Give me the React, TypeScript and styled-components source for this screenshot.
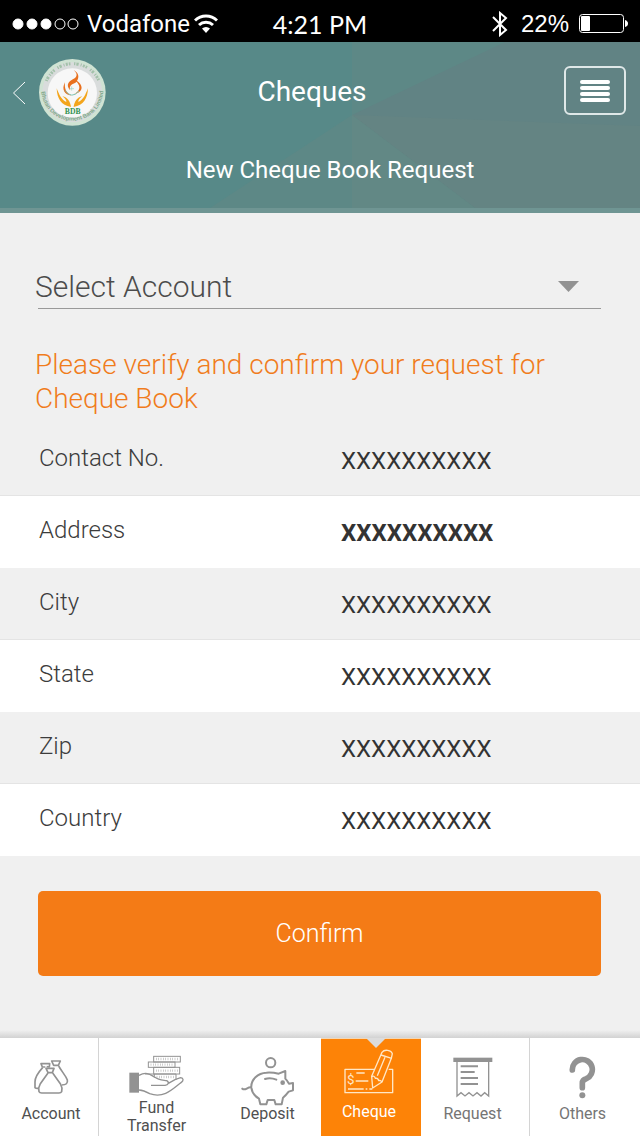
import React from "react";
import styled, { createGlobalStyle, css } from "styled-components";

const GlobalStyle = createGlobalStyle`
  *, *::before, *::after { box-sizing: border-box; }
  body {
    margin: 0;
    background: #f0f0f0;
    color: #3c3c3c;
    font-family: Roboto, "Liberation Sans", sans-serif;
  }
  button, select { font: inherit; color: inherit; }
`;

const Screen = styled.div`
  min-height: 100vh;
  display: flex;
  flex-direction: column;
`;

/* ---------- status bar ---------- */

const StatusBar = styled.div`
  height: 42px;
  padding: 6px 12px 0;
  background: #000;
  color: #fff;
  display: grid;
  grid-template-columns: 1fr auto 1fr;
  align-items: center;
  font-size: 24px;
  line-height: 30px;
`;

const StatusGroup = styled.div<{ $end?: boolean }>`
  display: flex;
  align-items: center;
  gap: ${(p) => (p.$end ? 10 : 4)}px;
  justify-content: ${(p) => (p.$end ? "flex-end" : "flex-start")};
`;

const Carrier = styled.span`
  padding-left: 4px;
`;

const Clock = styled.span`
  font-family: Lato, sans-serif;
  font-size: 25px;
`;

const Percent = styled.span`
  padding-left: 3px;
  font-family: "Liberation Sans", sans-serif;
`;

/* ---------- header ---------- */

const Header = styled.header`
  position: relative;
  height: 171px;
  background: #578988;
  border-bottom: 5px solid #6f9593;
  color: #fff;
`;

const Facets = styled.svg`
  position: absolute;
  inset: 0;
  width: 100%;
  height: 100%;
`;

const HeaderContent = styled.div`
  position: relative;
`;

const TitleRow = styled.div`
  display: grid;
  grid-template-columns: 1fr auto 1fr;
  align-items: center;
  padding: 17px 14px 0 12px;
`;

const Brand = styled.div`
  display: flex;
  align-items: center;
  gap: 12px;
`;

const BackButton = styled.button`
  display: flex;
  padding: 0;
  border: 0;
  background: none;
  cursor: pointer;
`;

const Title = styled.h1`
  margin: 0;
  padding: 0 14px 2px 0;
  font-size: 28px;
  line-height: 34px;
  font-weight: 400;
`;

const MenuButton = styled.button`
  justify-self: end;
  width: 62px;
  height: 49px;
  margin-bottom: 4px;
  padding: 0;
  display: flex;
  flex-direction: column;
  align-items: center;
  justify-content: center;
  gap: 2px;
  border: 2px solid #dfe8e8;
  border-radius: 6px;
  background: none;
  cursor: pointer;
`;

const MenuBar = styled.span`
  width: 30px;
  height: 4px;
  border-radius: 2px;
  background: #fff;
`;

const Subtitle = styled.h2`
  margin: 0;
  padding: 28px 0 0 20px;
  text-align: center;
  font-size: 24px;
  line-height: 32px;
  font-weight: 400;
`;

/* ---------- form ---------- */

const Form = styled.form`
  flex: 1;
  display: flex;
  flex-direction: column;
`;

const Field = styled.div`
  position: relative;
  display: flex;
  align-items: center;
  margin: 53px 39px 0 35px;
`;

const AccountSelect = styled.select`
  flex: 1;
  height: 40px;
  padding: 0;
  appearance: none;
  border: 0;
  background: none;
  font-size: 30px;
  font-weight: 300;
  color: #4c4c4c;
`;

const Caret = styled.svg`
  position: absolute;
  right: 22px;
  pointer-events: none;
`;

const Rule = styled.hr`
  width: auto;
  margin: 2px 39px 0 38px;
  border: 0;
  border-top: 1px solid #999;
`;

const Prompt = styled.p`
  margin: 39px 35px 8px;
  color: #f07c1c;
  font-size: 28px;
  line-height: 34px;
  font-weight: 300;
`;

const Details = styled.dl`
  margin: 0;
`;

const DetailRow = styled.div`
  display: grid;
  grid-template-columns: 302px 1fr;
  align-items: start;
  height: 72px;
  padding: 18px 38px 0 39px;
  font-size: 24px;
  line-height: 32px;
  &:nth-child(even) {
    background: #fff;
    box-shadow: 0 -1px #e4e4e4;
  }
`;

const DetailName = styled.dt`
  font-weight: 300;
`;

const DetailValue = styled.dd<{ $strong?: boolean }>`
  margin: 0;
  padding-top: 3px;
  font-weight: ${(p) => (p.$strong ? 700 : 400)};
  color: #333;
`;

const ConfirmButton = styled.button`
  height: 85px;
  margin: 35px 39px 0 38px;
  border: 0;
  border-radius: 5px;
  background: #f47b16;
  color: #fff;
  font-size: 25px;
  font-weight: 300;
  cursor: pointer;
`;

/* ---------- bottom navigation ---------- */

const NavShade = styled.div`
  height: 8px;
  margin-top: auto;
  background: linear-gradient(#f0f0f0, #d2d2d2);
`;

const Nav = styled.nav`
  display: grid;
  grid-template-columns: 98fr 116fr 107fr 100fr 108fr 111fr;
  height: 98px;
  background: #fff;
`;

type ItemTone = { $active?: boolean; $twoLine?: boolean; $divided?: boolean; $muted?: boolean; $first?: boolean };

const NavItem = styled.a<ItemTone>`
  position: relative;
  display: flex;
  flex-direction: column;
  align-items: center;
  color: ${(p) => (p.$muted ? "#757575" : "#505050")};
  font-size: 16px;
  line-height: ${(p) => (p.$twoLine ? 18 : 20)}px;
  text-align: center;
  text-decoration: none;
  ${(p) => p.$divided && css`border-left: 1px solid #d4d4d4;`}
  ${(p) => p.$first && css`padding-left: 4px;`}
  ${(p) => p.$muted && css`padding-right: 5px;`}
  ${(p) => p.$active && css`
    padding-right: 4px;
    border-top: 1px solid #f3d7b5;
    background: #fd8307;
    color: #fff;
    &::before {
      content: "";
      position: absolute;
      top: -1px;
      left: 45px;
      border: 10px solid transparent;
      border-top-color: #dcdcdc;
      border-bottom: 0;
    }
  `}
`;

const IconSlot = styled.span<{ $size?: "raised" | "short" | "low" }>`
  display: flex;
  align-items: center;
  height: 66px;
  padding-top: 12px;
  ${(p) => p.$size === "raised" && css`
    height: 63px;
    padding-top: 2px;
  `}
  ${(p) => p.$size === "short" && css`
    height: 61px;
    padding-top: 14px;
  `}
  ${(p) => p.$size === "low" && css`
    padding-top: 20px;
  `}
  svg { flex: none; }
`;

/* ---------- drawings ---------- */

const GREY = "#929292";

const Wifi = () => (
  <svg width="24" height="20" viewBox="0 0 24 20" fill="none" stroke="#fff" strokeWidth="3">
    <path d="M1 6.500A16 16 0 0 1 23 6.500" />
    <path d="M5 11A10.500 10.500 0 0 1 19 11" />
    <path d="M8 14.500A6 6 0 0 1 16 14.500L12 19Z" fill="#fff" stroke="none" />
  </svg>
);

const Signal = () => (
  <svg width="67" height="12" viewBox="0 0 67 12" fill="#fff" stroke="#fff">
    {[6, 20, 34].map((x) => <circle key={x} cx={x} cy="6" r="5" />)}
    {[48, 61].map((x) => <circle key={x} cx={x} cy="6" r="5" fill="none" />)}
  </svg>
);

const Bluetooth = () => (
  <svg width="16" height="26" viewBox="0 0 16 26" fill="none" stroke="#fff" strokeWidth="2">
    <path d="M1 6L14 19L8 24V2L14 7L1 20" />
  </svg>
);

const Battery = () => (
  <svg width="49" height="20" viewBox="0 0 49 20">
    <rect x="0.500" y="0.500" width="44" height="18" rx="3" fill="none" stroke="#fff" />
    <rect x="2" y="2" width="9" height="15" rx="1" fill="#fff" />
    <path d="M46 6Q49 7 49 9.500Q49 12 46 13Z" fill="#fff" />
  </svg>
);

const Logo = () => (
  <svg width="67" height="67" viewBox="0 0 201 201" role="img" aria-label="BDB">
    <circle cx="100" cy="100" r="100" fill="#cfe3d3" />
    <circle cx="100" cy="100" r="90" fill="#d9dcdc" />
    <circle cx="100" cy="102" r="74" fill="#f7f7f7" />
    <path id="ring-low" d="M7 92A93 93 0 0 0 193 92" fill="none" />
    <path d="M22 66A86 86 0 0 1 180 66" fill="none" stroke="#a3c2aa" strokeWidth="9" strokeDasharray="4 3 7 6 3 4 6 3 5 11" />
    <text fontFamily="Liberation Sans" fontWeight="700" fontSize="17" fill="#7fa98a">
      <textPath href="#ring-low" startOffset="6">Bhutan Development Bank Limited</textPath>
    </text>
    <path d="M104 33C120 48 112 56 98 63C84 71 83 83 94 94C88 76 103 76 113 68C127 84 122 96 105 105C140 98 128 74 114 66C121 54 120 42 104 33Z" fill="#e8701e" />
    <path d="M78 70C66 92 78 108 97 110C80 100 76 88 78 70Z" fill="#e8701e" />
    <path d="M78 94Q98 122 120 96" fill="none" stroke="#7fc4b4" strokeWidth="3" />
    <path d="M98 82V95M92 89H105" stroke="#9fd0c6" strokeWidth="2" />
    <path d="M53 88C54 118 66 139 96 144C94 128 86 115 70 112C79 118 82 124 82 129C67 122 61 108 53 88Z" fill="#f3a51c" />
    <path d="M147 88C146 118 134 139 104 144C106 128 114 115 130 112C121 118 118 124 118 129C133 122 139 108 147 88Z" fill="#f3a51c" />
    <text x="101" y="166" textAnchor="middle" fontFamily="Liberation Serif" fontWeight="700" fontSize="23" fill="#2f9250">BDB</text>
  </svg>
);

const AccountIcon = () => (
  <svg width="35" height="34" viewBox="95 92 105 102" fill="none" stroke={GREY} strokeWidth="5" strokeLinejoin="round">
    <path d="M148 95H174L168 108H154Z" />
    <path d="M169 110C178 127 190 138 195 152Q198 167 178 167" />
    <path d="M133 112L141 113L142 103H116L120 113H129" />
    <path d="M121 115C108 129 98 145 98 158V175Q101 178 109 177" />
    <path d="M131 117H155L150 130H137Z" />
    <path d="M137 131L114 163Q107 175 110 187Q112 191 118 191H170Q176 191 178 187Q181 175 174 163L151 131" />
  </svg>
);

const FundIcon = () => (
  <svg width="55" height="41" viewBox="392 73 165 123" fill="none" stroke={GREY} strokeWidth="4">
    <rect x="393" y="126" width="29" height="60" fill={GREY} stroke="none" />
    <g strokeWidth="3">
      <rect x="466" y="77" width="80" height="17" />
      <rect x="450" y="94" width="80" height="16" />
      <rect x="466" y="110" width="78" height="20" />
      <path d="M440 130H533V148M468 130V138" />
    </g>
    <g strokeWidth="7" strokeDasharray="2 5" stroke="#b5b5b5">
      <path d="M473 85H541M457 102H525M473 120H539M475 139H530" />
    </g>
    <path d="M422 134C446 121 457 133 470 140C480 148 492 148 505 150C514 155 510 163 500 164H458" />
    <path d="M510 158C522 150 534 144 547 141C556 142 556 150 549 155C534 166 520 180 502 188C488 194 468 194 454 189C443 183 435 179 422 178" />
  </svg>
);

const DepositIcon = () => (
  <svg width="53" height="49" viewBox="84 80 159 147" fill="none" stroke={GREY} strokeWidth="6" strokeLinejoin="round" strokeLinecap="round">
    <circle cx="173" cy="97" r="14" />
    <path d="M197 130L217 122V145C222 150 225 155 228 160L240 158V180L227 184C221 192 216 197 210 202L206 222H188L184 209H164L160 222H142L138 205C126 198 117 188 115 172C113 148 135 128 160 127C175 126 184 127 197 130Z" />
    <path d="M88 175C97 182 102 170 114 171" />
    <path d="M156 146Q172 140 190 148" />
    <circle cx="209" cy="157" r="7" fill={GREY} stroke="none" />
  </svg>
);

const ChequeIcon = () => (
  <svg width="50" height="45" viewBox="398 56 150 135" fill="none" stroke="#ffe7c6" strokeWidth="4" strokeLinejoin="round">
    <path d="M490 117H401V187H544V117H532" />
    <path d="M435 128H460M433 152H471M410 176H457M463 176H468M474 176H483" />
    <path d="M512 66C520 55 540 60 543 70L540 84L512 155L484 173L481 138Z" />
    <path d="M509 74L541 84M481 139Q488 134 492 144Q500 142 502 151Q508 149 512 155M521 81L498 136" />
    <text x="407" y="162" fontFamily="Roboto" fontSize="40" fill="#ffe7c6" stroke="none">$</text>
  </svg>
);

const RequestIcon = () => (
  <svg width="40" height="41" viewBox="95 76 120 123" fill="none" stroke={GREY} strokeWidth="4">
    <rect x="96" y="78" width="117" height="13" fill={GREY} stroke="none" />
    <path d="M107 91V193L119 183L131 193L143 183L155 193L167 183L179 193L190 183L202 193V91" />
    <path d="M118 104H170M118 121H160M118 139H170M118 157H170" strokeWidth="6" />
  </svg>
);

const OthersIcon = () => (
  <svg width="27" height="43" viewBox="452 79 81 129" fill="none" stroke={GREY} strokeWidth="17" strokeLinecap="round">
    <path d="M462 121A30 30 0 1 1 504 147Q492 150 492 160V174" />
    <circle cx="492" cy="197" r="9" fill={GREY} stroke="none" />
  </svg>
);

const details = [
  { name: "Contact No.", value: "XXXXXXXXXX" },
  { name: "Address", value: "XXXXXXXXXX", strong: true },
  { name: "City", value: "XXXXXXXXXX" },
  { name: "State", value: "XXXXXXXXXX" },
  { name: "Zip", value: "XXXXXXXXXX" },
  { name: "Country", value: "XXXXXXXXXX" },
];

export default function App() {
  return (
    <Screen>
      <GlobalStyle />
      <StatusBar>
        <StatusGroup>
          <Signal />
          <Carrier>Vodafone</Carrier>
          <Wifi />
        </StatusGroup>
        <Clock>4:21 PM</Clock>
        <StatusGroup $end>
          <Bluetooth />
          <Percent>22%</Percent>
          <Battery />
        </StatusGroup>
      </StatusBar>

      <Header>
        <Facets viewBox="0 0 640 166" preserveAspectRatio="none" aria-hidden="true">
          <path d="M352 0H640V166H210L352 73Z" fill="#5d8886" />
          <path d="M352 73L505 0H640V166H475Z" fill="#618384" />
          <path d="M352 73L640 84V166H475Z" fill="#648483" />
          <path d="M352 73L475 166H352Z" fill="#628885" />
        </Facets>
        <HeaderContent>
          <TitleRow>
            <Brand>
              <BackButton type="button" aria-label="Back">
                <svg width="15" height="24" viewBox="0 0 15 24" fill="none" stroke="#fff">
                  <path d="M13 1L1.500 12L13 23" />
                </svg>
              </BackButton>
              <Logo />
            </Brand>
            <Title>Cheques</Title>
            <MenuButton type="button" aria-label="Menu">
              <MenuBar /><MenuBar /><MenuBar /><MenuBar />
            </MenuButton>
          </TitleRow>
          <Subtitle>New Cheque Book Request</Subtitle>
        </HeaderContent>
      </Header>

      <Form onSubmit={(e) => e.preventDefault()}>
        <Field>
          <AccountSelect aria-label="Select Account" defaultValue="">
            <option value="">Select Account</option>
          </AccountSelect>
          <Caret width="21" height="11" viewBox="0 0 21 11">
            <path d="M0 0H21L10.500 11Z" fill="#929292" />
          </Caret>
        </Field>
        <Rule />
        <Prompt>Please verify and confirm your request for Cheque Book</Prompt>
        <Details>
          {details.map((d) => (
            <DetailRow key={d.name}>
              <DetailName>{d.name}</DetailName>
              <DetailValue $strong={d.strong}>{d.value}</DetailValue>
            </DetailRow>
          ))}
        </Details>
        <ConfirmButton type="submit">Confirm</ConfirmButton>
        <NavShade />
      </Form>

      <Nav>
        <NavItem href="#account" $first><IconSlot><AccountIcon /></IconSlot>Account</NavItem>
        <NavItem href="#transfer" $twoLine $divided>
          <IconSlot $size="short"><FundIcon /></IconSlot>
          <span>Fund<br />Transfer</span>
        </NavItem>
        <NavItem href="#deposit"><IconSlot $size="low"><DepositIcon /></IconSlot>Deposit</NavItem>
        <NavItem href="#cheque" $active aria-current="page"><IconSlot $size="raised"><ChequeIcon /></IconSlot>Cheque</NavItem>
        <NavItem href="#request" $muted><IconSlot><RequestIcon /></IconSlot>Request</NavItem>
        <NavItem href="#others" $muted $divided><IconSlot><OthersIcon /></IconSlot>Others</NavItem>
      </Nav>
    </Screen>
  );
}
